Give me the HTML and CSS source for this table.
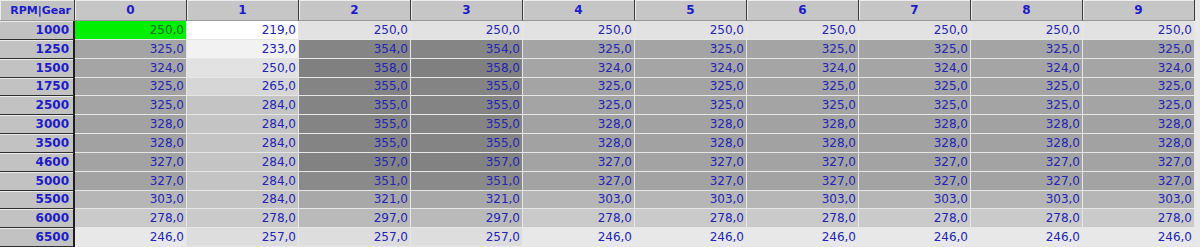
FILE: index.html
```html
<!DOCTYPE html>
<html>
<head>
<meta charset="utf-8">
<link rel="stylesheet" href="styles.css">
</head>
<body>
<div class="grid">
  <div class="corner">RPM|Gear</div>
  <div class="colhead">0</div><div class="colhead">1</div><div class="colhead">2</div><div class="colhead">3</div><div class="colhead">4</div><div class="colhead">5</div><div class="colhead">6</div><div class="colhead">7</div><div class="colhead">8</div><div class="colhead">9</div>

  <div class="rowhead">1000</div>
  <div class="cell selected">250,0</div><div class="cell" style="background:#ffffff">219,0</div><div class="cell" style="background:#e2e2e2">250,0</div><div class="cell" style="background:#e2e2e2">250,0</div><div class="cell" style="background:#e2e2e2">250,0</div><div class="cell" style="background:#e2e2e2">250,0</div><div class="cell" style="background:#e2e2e2">250,0</div><div class="cell" style="background:#e2e2e2">250,0</div><div class="cell" style="background:#e2e2e2">250,0</div><div class="cell" style="background:#e2e2e2">250,0</div>

  <div class="rowhead">1250</div>
  <div class="cell" style="background:#a4a4a4">325,0</div><div class="cell" style="background:#f2f2f2">233,0</div><div class="cell" style="background:#858585">354,0</div><div class="cell" style="background:#858585">354,0</div><div class="cell" style="background:#a4a4a4">325,0</div><div class="cell" style="background:#a4a4a4">325,0</div><div class="cell" style="background:#a4a4a4">325,0</div><div class="cell" style="background:#a4a4a4">325,0</div><div class="cell" style="background:#a4a4a4">325,0</div><div class="cell" style="background:#a4a4a4">325,0</div>

  <div class="rowhead">1500</div>
  <div class="cell" style="background:#a5a5a5">324,0</div><div class="cell" style="background:#e2e2e2">250,0</div><div class="cell" style="background:#808080">358,0</div><div class="cell" style="background:#808080">358,0</div><div class="cell" style="background:#a5a5a5">324,0</div><div class="cell" style="background:#a5a5a5">324,0</div><div class="cell" style="background:#a5a5a5">324,0</div><div class="cell" style="background:#a5a5a5">324,0</div><div class="cell" style="background:#a5a5a5">324,0</div><div class="cell" style="background:#a5a5a5">324,0</div>

  <div class="rowhead">1750</div>
  <div class="cell" style="background:#a4a4a4">325,0</div><div class="cell" style="background:#d6d6d6">265,0</div><div class="cell" style="background:#848484">355,0</div><div class="cell" style="background:#848484">355,0</div><div class="cell" style="background:#a4a4a4">325,0</div><div class="cell" style="background:#a4a4a4">325,0</div><div class="cell" style="background:#a4a4a4">325,0</div><div class="cell" style="background:#a4a4a4">325,0</div><div class="cell" style="background:#a4a4a4">325,0</div><div class="cell" style="background:#a4a4a4">325,0</div>

  <div class="rowhead">2500</div>
  <div class="cell" style="background:#a4a4a4">325,0</div><div class="cell" style="background:#c4c4c4">284,0</div><div class="cell" style="background:#848484">355,0</div><div class="cell" style="background:#848484">355,0</div><div class="cell" style="background:#a4a4a4">325,0</div><div class="cell" style="background:#a4a4a4">325,0</div><div class="cell" style="background:#a4a4a4">325,0</div><div class="cell" style="background:#a4a4a4">325,0</div><div class="cell" style="background:#a4a4a4">325,0</div><div class="cell" style="background:#a4a4a4">325,0</div>

  <div class="rowhead">3000</div>
  <div class="cell" style="background:#a2a2a2">328,0</div><div class="cell" style="background:#c4c4c4">284,0</div><div class="cell" style="background:#848484">355,0</div><div class="cell" style="background:#848484">355,0</div><div class="cell" style="background:#a2a2a2">328,0</div><div class="cell" style="background:#a2a2a2">328,0</div><div class="cell" style="background:#a2a2a2">328,0</div><div class="cell" style="background:#a2a2a2">328,0</div><div class="cell" style="background:#a2a2a2">328,0</div><div class="cell" style="background:#a2a2a2">328,0</div>

  <div class="rowhead">3500</div>
  <div class="cell" style="background:#a2a2a2">328,0</div><div class="cell" style="background:#c4c4c4">284,0</div><div class="cell" style="background:#848484">355,0</div><div class="cell" style="background:#848484">355,0</div><div class="cell" style="background:#a2a2a2">328,0</div><div class="cell" style="background:#a2a2a2">328,0</div><div class="cell" style="background:#a2a2a2">328,0</div><div class="cell" style="background:#a2a2a2">328,0</div><div class="cell" style="background:#a2a2a2">328,0</div><div class="cell" style="background:#a2a2a2">328,0</div>

  <div class="rowhead">4600</div>
  <div class="cell" style="background:#a3a3a3">327,0</div><div class="cell" style="background:#c4c4c4">284,0</div><div class="cell" style="background:#828282">357,0</div><div class="cell" style="background:#828282">357,0</div><div class="cell" style="background:#a3a3a3">327,0</div><div class="cell" style="background:#a3a3a3">327,0</div><div class="cell" style="background:#a3a3a3">327,0</div><div class="cell" style="background:#a3a3a3">327,0</div><div class="cell" style="background:#a3a3a3">327,0</div><div class="cell" style="background:#a3a3a3">327,0</div>

  <div class="rowhead">5000</div>
  <div class="cell" style="background:#a3a3a3">327,0</div><div class="cell" style="background:#c4c4c4">284,0</div><div class="cell" style="background:#8a8a8a">351,0</div><div class="cell" style="background:#8a8a8a">351,0</div><div class="cell" style="background:#a3a3a3">327,0</div><div class="cell" style="background:#a3a3a3">327,0</div><div class="cell" style="background:#a3a3a3">327,0</div><div class="cell" style="background:#a3a3a3">327,0</div><div class="cell" style="background:#a3a3a3">327,0</div><div class="cell" style="background:#a3a3a3">327,0</div>

  <div class="rowhead">5500</div>
  <div class="cell" style="background:#b6b6b6">303,0</div><div class="cell" style="background:#c4c4c4">284,0</div><div class="cell" style="background:#a8a8a8">321,0</div><div class="cell" style="background:#a8a8a8">321,0</div><div class="cell" style="background:#b6b6b6">303,0</div><div class="cell" style="background:#b6b6b6">303,0</div><div class="cell" style="background:#b6b6b6">303,0</div><div class="cell" style="background:#b6b6b6">303,0</div><div class="cell" style="background:#b6b6b6">303,0</div><div class="cell" style="background:#b6b6b6">303,0</div>

  <div class="rowhead">6000</div>
  <div class="cell" style="background:#cacaca">278,0</div><div class="cell" style="background:#cacaca">278,0</div><div class="cell" style="background:#bababa">297,0</div><div class="cell" style="background:#bababa">297,0</div><div class="cell" style="background:#cacaca">278,0</div><div class="cell" style="background:#cacaca">278,0</div><div class="cell" style="background:#cacaca">278,0</div><div class="cell" style="background:#cacaca">278,0</div><div class="cell" style="background:#cacaca">278,0</div><div class="cell" style="background:#cacaca">278,0</div>

  <div class="rowhead">6500</div>
  <div class="cell" style="background:#e8e8e8">246,0</div><div class="cell" style="background:#dddddd">257,0</div><div class="cell" style="background:#dddddd">257,0</div><div class="cell" style="background:#dddddd">257,0</div><div class="cell" style="background:#e8e8e8">246,0</div><div class="cell" style="background:#e8e8e8">246,0</div><div class="cell" style="background:#e8e8e8">246,0</div><div class="cell" style="background:#e8e8e8">246,0</div><div class="cell" style="background:#e8e8e8">246,0</div><div class="cell" style="background:#e8e8e8">246,0</div>
</div>
</body>
</html>
```

FILE: styles.css
```css
html, body {
  margin: 0;
  padding: 0;
  background: #e8e8e8;
  overflow: hidden;
}

.grid {
  display: grid;
  grid-template-columns: 75px repeat(10, 112px);
  grid-template-rows: 21px repeat(12, 1fr);
  width: 1195px;
  height: 247px;
  font-family: "DejaVu Sans", Verdana, sans-serif;
  font-size: 12px;
}

.corner,
.colhead,
.rowhead,
.cell {
  box-sizing: border-box;
  display: flex;
  align-items: center;
  overflow: hidden;
  white-space: nowrap;
}

.corner,
.colhead {
  background: #c6c6c6;
  color: #1c1cc8;
  font-weight: bold;
  border-right: 1px solid #3c3c3c;
  border-bottom: 1px solid #9a9a9a;
  box-shadow: inset 1px 1px 0 #ececec;
}

.corner {
  justify-content: flex-end;
  padding-right: 3px;
  background: #c2c2c2;
  font-size: 11px;
}

.colhead {
  justify-content: center;
}

.rowhead {
  justify-content: flex-end;
  padding-right: 4px;
  background: #c2c2c2;
  color: #1c1cc8;
  font-weight: bold;
  border-right: 2px solid #1e1e1e;
  border-bottom: 1px solid #2e2e2e;
  box-shadow: inset 0 1px 0 #ececec;
}

.cell {
  justify-content: flex-end;
  padding-right: 2px;
  color: #2424b4;
  border-right: 1px solid #e6e6e6;
  border-bottom: 1px solid #e6e6e6;
}

.cell.selected {
  background: #00f000;
  color: #1e6e1e;
}
```
